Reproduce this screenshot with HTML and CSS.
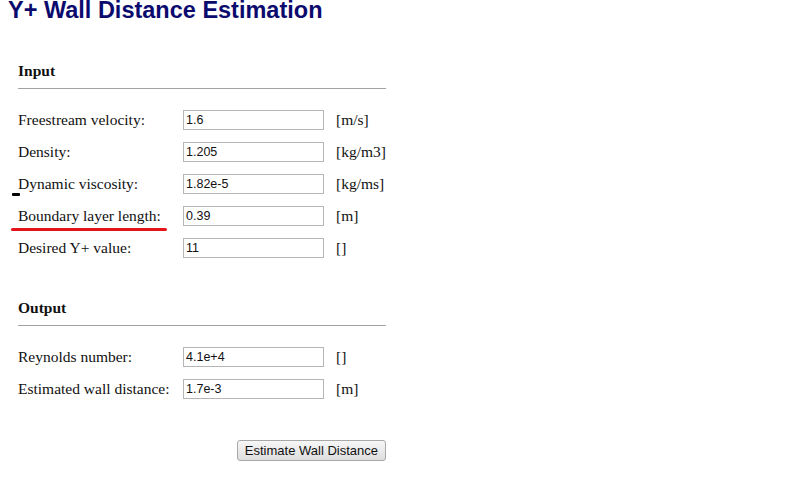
FILE: index.html
```html
<!DOCTYPE html>
<html>
<head>
<meta charset="utf-8">
<title>Y+ Wall Distance Estimation</title>
<link rel="stylesheet" href="styles.css">
</head>
<body>
<h1 class="title">Y+ Wall Distance Estimation</h1>
<div class="form">
  <section class="group">
    <h2 class="group-head">Input</h2>
    <div class="rows">
      <div class="row"><span class="label">Freestream velocity:</span><input class="field" type="text" value="1.6"><span class="unit">[m/s]</span></div>
      <div class="row"><span class="label">Density:</span><input class="field" type="text" value="1.205"><span class="unit">[kg/m3]</span></div>
      <div class="row"><span class="label">Dynamic viscosity:</span><input class="field" type="text" value="1.82e-5"><span class="unit">[kg/ms]</span></div>
      <div class="row"><span class="label">Boundary layer length:</span><input class="field" type="text" value="0.39"><span class="unit">[m]</span></div>
      <div class="row"><span class="label">Desired Y+ value:</span><input class="field" type="text" value="11"><span class="unit">[]</span></div>
    </div>
  </section>
  <section class="group group-output">
    <h2 class="group-head">Output</h2>
    <div class="rows">
      <div class="row"><span class="label">Reynolds number:</span><input class="field" type="text" value="4.1e+4"><span class="unit">[]</span></div>
      <div class="row"><span class="label">Estimated wall distance:</span><input class="field" type="text" value="1.7e-3"><span class="unit">[m]</span></div>
    </div>
  </section>
  <div class="actions">
    <button class="btn" type="button">Estimate Wall Distance</button>
  </div>
  <span class="mark-dash"></span>
  <span class="mark-underline"></span>
</div>
</body>
</html>
```
FILE: styles.css
```css
html, body {
  margin: 0;
  padding: 0;
  background: #ffffff;
}

body {
  font-family: "Liberation Serif", "Times New Roman", serif;
  color: #111;
}

.title {
  margin: -2px 0 0 8px;
  font-family: "Liberation Sans", Arial, sans-serif;
  font-weight: bold;
  font-size: 23.5px;
  line-height: 24px;
  color: #0b0b6e;
}

.form {
  position: relative;
  margin: 39px 0 0 18px;
  width: 368px;
}

.group-output {
  margin-top: 34px;
}

.group-head {
  margin: 0;
  font-size: 15.5px;
  font-weight: bold;
  line-height: 20px;
  padding-bottom: 7px;
  border-bottom: 1px solid #a3a3a3;
  color: #111;
}

.rows {
  margin-top: 15px;
  display: flex;
  flex-direction: column;
}

.row {
  height: 32px;
  display: grid;
  grid-template-columns: 153px 141px auto;
  column-gap: 12px;
  align-items: center;
  font-size: 15.5px;
}

.field {
  box-sizing: border-box;
  width: 141px;
  height: 20px;
  margin: 0;
  padding: 0 2px;
  border: 1px solid #b5b5b5;
  font-family: "Liberation Sans", Arial, sans-serif;
  font-size: 12.5px;
  color: #111;
  background: #fff;
  outline: none;
}

.actions {
  margin-top: 35px;
  display: flex;
  justify-content: flex-end;
}

.btn {
  box-sizing: border-box;
  height: 21px;
  padding: 0 7px;
  border: 1px solid #a8a8a8;
  border-radius: 3px;
  background: linear-gradient(#f7f7f7, #dddddd);
  font-family: "Liberation Sans", Arial, sans-serif;
  font-size: 13px;
  color: #111;
}

.mark-dash {
  position: absolute;
  left: -6px;
  top: 132px;
  width: 8px;
  height: 3px;
  background: #000;
  border-radius: 1px;
}

.mark-underline {
  position: absolute;
  left: -7px;
  top: 167px;
  width: 156px;
  height: 3px;
  background: #e3151b;
  border-radius: 2px;
}
```
